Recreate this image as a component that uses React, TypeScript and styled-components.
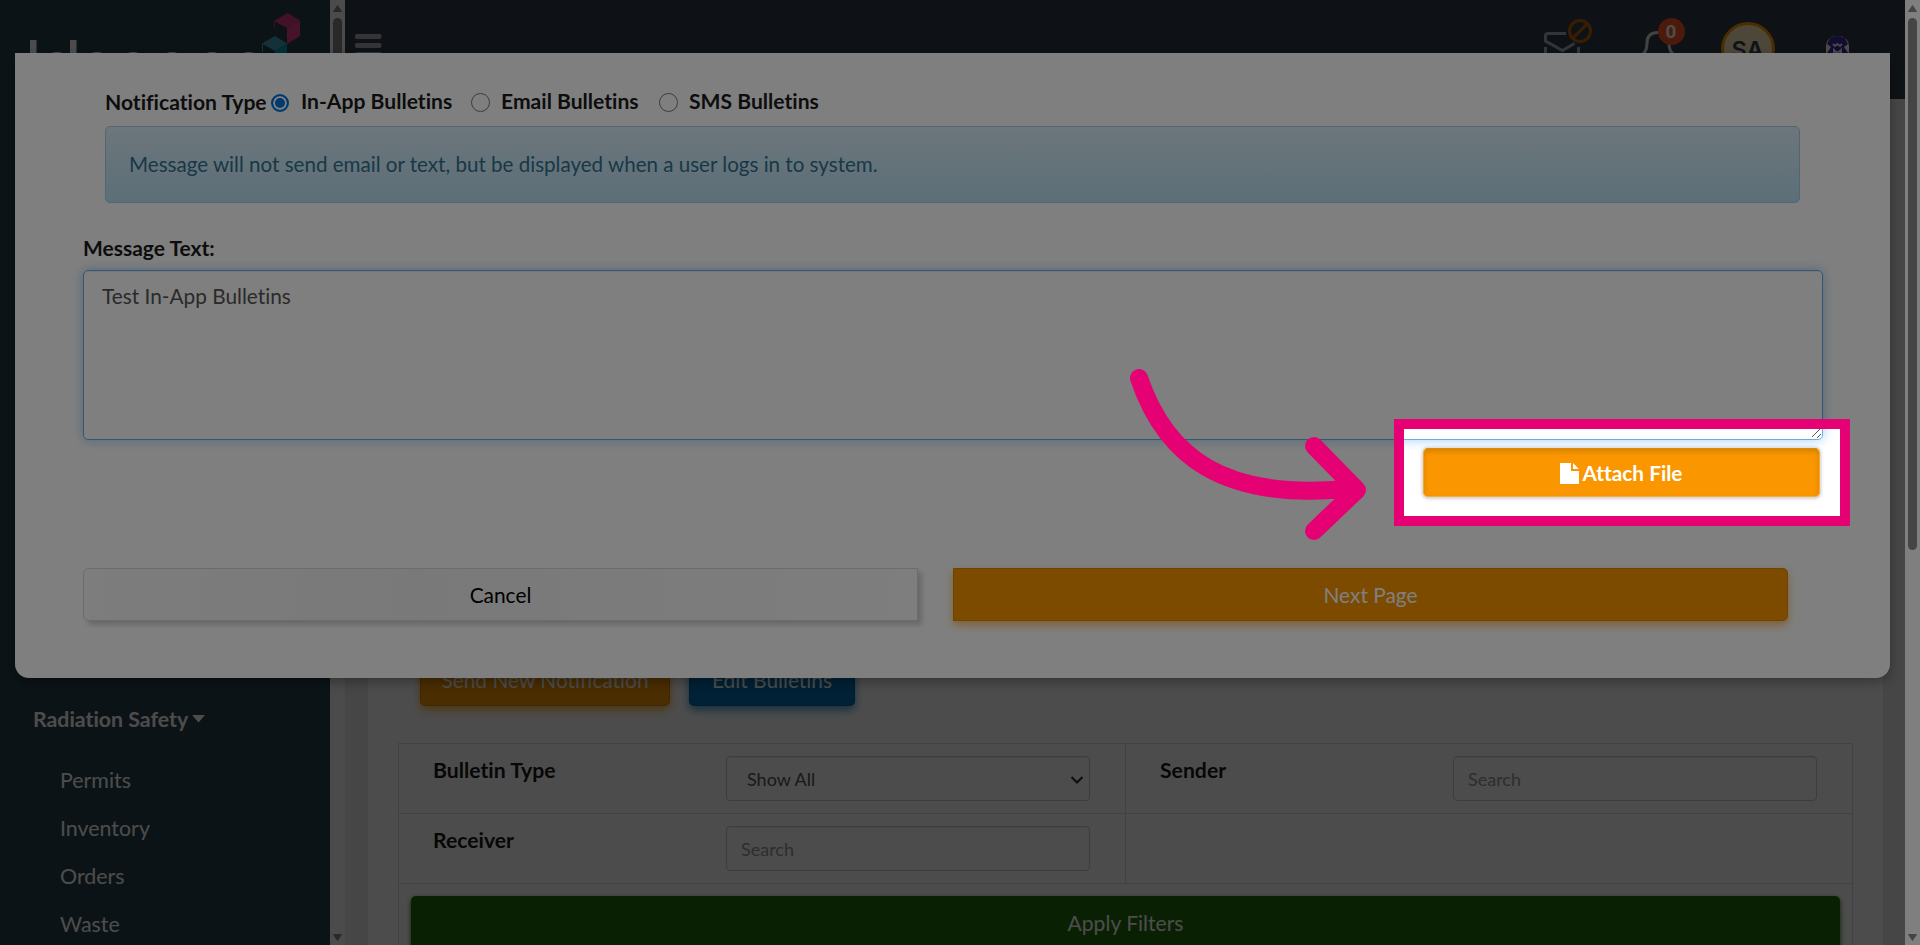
import React from "react";
import styled, { createGlobalStyle, css } from "styled-components";

const Global = createGlobalStyle`
  *, *::before, *::after { box-sizing: border-box; }
  html, body { margin: 0; height: 100%; overflow: hidden; }
  body { font: 400 21px/1.42857 Lato, "Liberation Sans", sans-serif; font-variant-ligatures: none; color: #1a1a1a; background: #e9e9eb; }
  button { font-variant-ligatures: none !important; }
`;

const Viewport = styled.div`
  position: relative;
  display: flex;
  width: 1920px;
  height: 945px;
  overflow: hidden;
`;

const Page = styled.div`
  display: flex;
  width: 1905px;
  flex: none;
`;

const Sidebar = styled.aside`
  width: 330px;
  flex: none;
  display: flex;
  flex-direction: column;
  background: #26414b;
  color: #fff;
`;

const Brand = styled.div`
  height: 115px;
  flex: none;
`;

const NavSpacer = styled.div`
  height: 584px;
  flex: none;
`;

const NavGroup = styled.div`
  display: flex;
  align-items: center;
  gap: 4px;
  height: 40px;
  padding-left: 33px;
  font-weight: 700;
  font-size: 21.3px;
  margin-bottom: 17px;
  flex: none;
`;

const NavItem = styled.a`
  display: block;
  height: 48px;
  line-height: 48px;
  padding-left: 60px;
  font-size: 21.4px;
  flex: none;
`;

const ScrollTrack = styled.div<{ $bg: string }>`
  display: flex;
  flex-direction: column;
  align-items: center;
  width: 15px;
  height: 945px;
  flex: none;
  padding: 5px 0 4px;
  background: ${(p) => p.$bg};
`;

const Thumb = styled.div<{ $h: number }>`
  width: 9px;
  height: ${(p) => p.$h}px;
  margin: 6px 0 auto;
  border-radius: 5px;
  background: #8b8b8b;
`;

const Main = styled.main`
  flex: 1;
  min-width: 0;
  display: flex;
  flex-direction: column;
  background: #e9e9eb;
`;

const TopBar = styled.header`
  display: flex;
  height: 99px;
  flex: none;
  padding-left: 10px;
  background: #303f4a;
`;

const TopIcons = styled.svg`
  margin-left: auto;
  flex: none;
`;

const Panel = styled.section`
  display: flex;
  flex-direction: column;
  width: 1515px;
  height: 846px;
  margin-left: 23px;
  padding: 551px 30px 0;
  background: #fff;
`;

const Actions = styled.div`
  display: flex;
  gap: 19px;
  margin: 0 0 37px 22px;
`;

const ActionButton = styled.button<{ $color: string; $w: number }>`
  width: ${(p) => p.$w}px;
  height: 56px;
  padding: 2px 0 0;
  border: 1px solid rgba(0, 0, 0, 0.12);
  border-radius: 5px;
  background: ${(p) => p.$color};
  box-shadow: 0 4px 8px ${(p) => p.$color}b0;
  color: #fff;
  font: 400 20.9px Lato, sans-serif;
  white-space: nowrap;
`;

const Filters = styled.div`
  display: grid;
  grid-template-columns: 727px 727px;
  grid-auto-rows: 70px;
  width: 1455px;
  height: 220px;
  flex: none;
  border: 1px solid #ddd;
  border-bottom: 0;
`;

const FilterCell = styled.div<{ $last?: boolean }>`
  display: flex;
  justify-content: space-between;
  align-items: flex-start;
  padding: 12px ${(p) => (p.$last ? 36 : 35)}px 0 34px;
  border-bottom: 1px solid #ddd;
  border-right: ${(p) => (p.$last ? 0 : "1px solid #ddd")};
`;

const FilterLabel = styled.label`
  font-weight: 700;
  font-size: 21.2px;
  line-height: 29px;
`;

const Field = styled.div<{ $select?: boolean }>`
  display: flex;
  align-items: center;
  justify-content: space-between;
  width: 364px;
  height: 45px;
  padding: 2px 5px 0 ${(p) => (p.$select ? 20 : 14)}px;
  border: 1px solid #ccc;
  border-radius: 4px;
  box-shadow: inset 0 1px 1px rgba(0, 0, 0, 0.08);
  color: ${(p) => (p.$select ? "#555" : "#999")};
  font-size: 18px;
`;

const ApplyRow = styled.div`
  grid-column: 1 / -1;
  padding: 12px 12px 0;
`;

const ApplyButton = styled.button`
  width: 1429px;
  height: 55px;
  padding: 0 0 2px;
  border: 0;
  border-radius: 5px;
  background: #236b0d;
  box-shadow: 0 2px 5px #236b0d;
  color: #fff;
  font: 400 21.1px Lato, sans-serif;
`;

const Backdrop = styled.div`
  position: absolute;
  inset: 0 15px 0 0;
  background: rgba(0, 0, 0, 0.4);
`;

const Modal = styled.div`
  position: absolute;
  left: 15px;
  top: 53px;
  width: 1875px;
  height: 625px;
  display: flex;
  flex-direction: column;
  padding: 33px 67px 0 68px;
  border-radius: 0 0 14px 14px;
  background: #fff;
  box-shadow: 0 4px 12px rgba(0, 0, 0, 0.3);
  color: #1a1a1a;
`;

const TypeRow = styled.div`
  display: flex;
  align-items: center;
  height: 34px;
  padding: 0 0 1px 22px;
  font-weight: 700;
  font-size: 21.1px;
  white-space: nowrap;
`;

const TypeText = styled.span<{ $w: number; $title?: boolean }>`
  width: ${(p) => p.$w}px;
  padding-bottom: ${(p) => (p.$title ? 0 : 2)}px;
  flex: none;
`;

const Radio = styled.span<{ $on?: boolean }>`
  width: ${(p) => (p.$on ? 18 : 19)}px;
  height: ${(p) => (p.$on ? 18 : 19)}px;
  flex: none;
  margin-right: ${(p) => (p.$on ? 12 : 11)}px;
  border-radius: 50%;
  border: ${(p) => (p.$on ? "2px solid #0075dd" : "1.5px solid #767676")};
  ${(p) => p.$on && css`
    background: #0075dd;
    box-shadow: inset 0 0 0 2px #fff;
  `}
`;

const Info = styled.div`
  display: flex;
  align-items: center;
  width: 1695px;
  height: 77px;
  margin: 6px 0 0 22px;
  padding-left: 23px;
  border: 1px solid #9acfea;
  border-radius: 5px;
  background: linear-gradient(#d9edf7, #b9def0);
  color: #31708f;
  font-size: 20.58px;
  text-shadow: 0 1px 0 rgba(255, 255, 255, 0.2);
`;

const MessageLabel = styled.label`
  height: 31px;
  margin-top: 30px;
  font-weight: 700;
  font-size: 21px;
  line-height: 29px;
`;

const MessageBox = styled.div`
  display: flex;
  justify-content: space-between;
  width: 1740px;
  height: 170px;
  margin-top: 6px;
  padding: 10px 0 0 18px;
  border: 1px solid #66afe9;
  border-radius: 5px;
  box-shadow: inset 0 1px 1px rgba(0, 0, 0, 0.075), 0 0 12px rgba(102, 175, 233, 0.6);
  color: #555;
  font-size: 20.8px;
`;

const Grip = styled.svg`
  align-self: flex-end;
`;

const AttachButton = styled.button`
  display: flex;
  align-items: center;
  justify-content: center;
  gap: 4px;
  align-self: flex-end;
  width: 397px;
  height: 49px;
  margin: 8px 3px 0 0;
  padding: 0 1px 0 0;
  border: 1px solid;
  border-color: #d98b10 #f5a833 #f7ac3b;
  border-radius: 5px;
  background: #f99600;
  box-shadow: inset 0 3px 5px rgba(0, 0, 0, 0.125), 0 0 2px 2px rgba(0, 0, 0, 0.09), 0 2px 4px rgba(0, 0, 0, 0.1);
  color: #fff;
  font: 700 20.8px Lato, sans-serif;
`;

const FileIcon = styled.svg`
  margin-top: 2px;
`;

const Footer = styled.div`
  display: flex;
  gap: 35px;
  margin-top: 71px;
`;

const FooterButton = styled.button<{ $primary?: boolean }>`
  width: 835px;
  height: 53px;
  padding: 0;
  border-radius: ${(p) => (p.$primary ? "0 5px 5px 0" : "5px 0 0 5px")};
  border: 1px solid ${(p) => (p.$primary ? "#e08700" : "#d9d9d9")};
  background: ${(p) => (p.$primary ? "#f99600" : "linear-gradient(90deg, #fafafa, #f3f3f3 40%, #fcfcfc)")};
  box-shadow: ${(p) => (p.$primary ? "0 4px 8px rgba(249, 150, 0, 0.6)" : "4px 4px 5px rgba(0, 0, 0, 0.18)")};
  color: ${(p) => (p.$primary ? "#fff" : "#000")};
  font: 400 20.9px Lato, sans-serif;
`;

const Spotlight = styled.div`
  position: absolute;
  left: 1394px;
  top: 419px;
  width: 456px;
  height: 107px;
  border: 10px solid #e50073;
  box-shadow: 0 0 0 2000px rgba(0, 0, 0, 0.5);
`;

const Arrow = styled.svg`
  position: absolute;
  left: 1120px;
  top: 360px;
`;

const Scrollbar = ({ thumb, bg }: { thumb: number; bg: string }) => (
  <ScrollTrack $bg={bg}>
    <svg width="9" height="7"><path d="M4.5 0.5 8.5 6.5H.5z" fill="#8b8b8b" stroke="#8b8b8b" strokeLinejoin="round" /></svg>
    <Thumb $h={thumb} />
    <svg width="9" height="7"><path d="M4.5 6.5 8.5.5H.5z" fill="#8b8b8b" stroke="#8b8b8b" strokeLinejoin="round" /></svg>
  </ScrollTrack>
);

const Logo = () => (
  <svg width="330" height="115">
    <path d="M30 40h6.500v40H30zM70 40h6.500v40H70z" fill="#fff" />
    <g fill="none" stroke="#fff" strokeWidth="6">
      {[57, 97, 133, 172, 212, 249].map((x) => <circle key={x} cx={x} cy="67.500" r="12.500" />)}
    </g>
    <path d="M274 21 287.500 13 300 20.500 287 28z" fill="#de3a80" />
    <path d="M287 28 300 20.500V36L287 44z" fill="#e84390" />
    <path d="M274.500 21v7" stroke="#d63384" />
    <path d="M262 43.500 275 36 287 43.500 275 51z" fill="#49a5b8" />
    <path d="M275 51 287 43.500V60L275 67z" fill="#00a3b8" />
    <path d="M262.500 44v8" stroke="#49a5b8" />
  </svg>
);

const HeaderIcons = () => (
  <TopIcons width="380" height="99" viewBox="1525 0 380 99">
    <g fill="none" stroke="#aab3c2" strokeWidth="3">
      <path d="M1566 33.500h-18q-2.500 0-2.500 2.500v5l17 9.500 12-7M1545.500 47v20h33V47" />
      <path d="M1643 54q4-3 4-11 0-10.500 11-10.500t11 10.500q0 8 4 11" stroke="#ddd" />
    </g>
    <g fill="none" stroke="#c46200" strokeWidth="3">
      <circle cx="1580" cy="31" r="10.500" /><path d="m1572.500 38.500 15-15" />
    </g>
    <circle cx="1671.500" cy="31.500" r="13.500" fill="#ff5522" />
    <text x="1671" y="38" textAnchor="middle" fontFamily="Roboto" fontWeight="700" fontSize="19" fill="#fff">0</text>
    <circle cx="1748" cy="49" r="25.500" fill="#ffefbe" stroke="#f99a00" strokeWidth="3" />
    <text x="1747.500" y="58" textAnchor="middle" fontFamily="Inter" fontWeight="600" fontSize="23.500" fill="#344256">SA</text>
    <rect x="1826" y="36" width="23" height="28" rx="10" fill="#fff" />
    <path d="M1830 38q7-4 15 0l3 6-4 3 4 6v12h-21V53l4-6-4-3z" fill="#3b2ba0" />
    <path d="m1833 44 2 2 2.500-2 2.500 2 2-2M1834 54v-4l3.500 3 3.500-3v4" stroke="#eee" fill="none" strokeWidth="2" />
  </TopIcons>
);

const Menu = () => (
  <svg width="30" height="99">
    <g fill="#b0b0b4"><rect y="34" width="26.500" height="5" rx="2" /><rect y="43" width="26.500" height="5" rx="2" /><rect y="52" width="26.500" height="5" rx="2" /></g>
  </svg>
);

export default function App() {
  return (
    <>
      <Global />
      <Viewport>
        <Page>
          <Sidebar>
            <Brand><Logo /></Brand>
            <NavSpacer />
            <NavGroup>
              Radiation Safety
              <svg width="13" height="8"><path d="M0 0h13L6.500 7.500z" fill="#fff" /></svg>
            </NavGroup>
            {["Permits", "Inventory", "Orders", "Waste"].map((t) => <NavItem key={t}>{t}</NavItem>)}
          </Sidebar>
          <Scrollbar thumb={520} bg="#fafafa" />
          <Main>
            <TopBar><Menu /><HeaderIcons /></TopBar>
            <Panel>
              <Actions>
                <ActionButton $color="#f99600" $w={250}>Send New Notification</ActionButton>
                <ActionButton $color="#006fb5" $w={166}>Edit Bulletins</ActionButton>
              </Actions>
              <Filters>
                <FilterCell>
                  <FilterLabel>Bulletin Type</FilterLabel>
                  <Field $select>
                    Show All
                    <svg width="14" height="10"><path d="m1.500 2 5.500 5.500L12.500 2" fill="none" stroke="#333" strokeWidth="2.200" /></svg>
                  </Field>
                </FilterCell>
                <FilterCell $last><FilterLabel>Sender</FilterLabel><Field>Search</Field></FilterCell>
                <FilterCell><FilterLabel>Receiver</FilterLabel><Field>Search</Field></FilterCell>
                <FilterCell $last />
                <ApplyRow><ApplyButton>Apply Filters</ApplyButton></ApplyRow>
              </Filters>
            </Panel>
          </Main>
        </Page>
        <Scrollbar thumb={532} bg="#fff" />
        <Backdrop />
        <Modal>
          <TypeRow>
            <TypeText $w={166} $title>Notification Type</TypeText>
            <Radio $on /><TypeText $w={170}>In-App Bulletins</TypeText>
            <Radio /><TypeText $w={158}>Email Bulletins</TypeText>
            <Radio /><TypeText $w={160}>SMS Bulletins</TypeText>
          </TypeRow>
          <Info>Message will not send email or text, but be displayed when a user logs in to system.</Info>
          <MessageLabel>Message Text:</MessageLabel>
          <MessageBox>
            Test In-App Bulletins
            <Grip width="11" height="12"><path d="m1 10 8-8M6 11l4-4" stroke="#555" strokeWidth="1" /></Grip>
          </MessageBox>
          <AttachButton>
            <FileIcon width="19" height="21"><path d="M0 0h11v8h8v13H0zM13 0l6 6h-6z" fill="#fff" /></FileIcon>
            Attach File
          </AttachButton>
          <Footer>
            <FooterButton>Cancel</FooterButton>
            <FooterButton $primary>Next Page</FooterButton>
          </Footer>
        </Modal>
        <Spotlight />
        <Arrow width="260" height="190" viewBox="1120 360 260 190">
          <path d="M1139 378C1165 455 1222 503 1355 488M1314 446 1357 490 1314 531" fill="none" stroke="#e50073" strokeWidth="18" strokeLinecap="round" strokeLinejoin="round" />
        </Arrow>
      </Viewport>
    </>
  );
}
